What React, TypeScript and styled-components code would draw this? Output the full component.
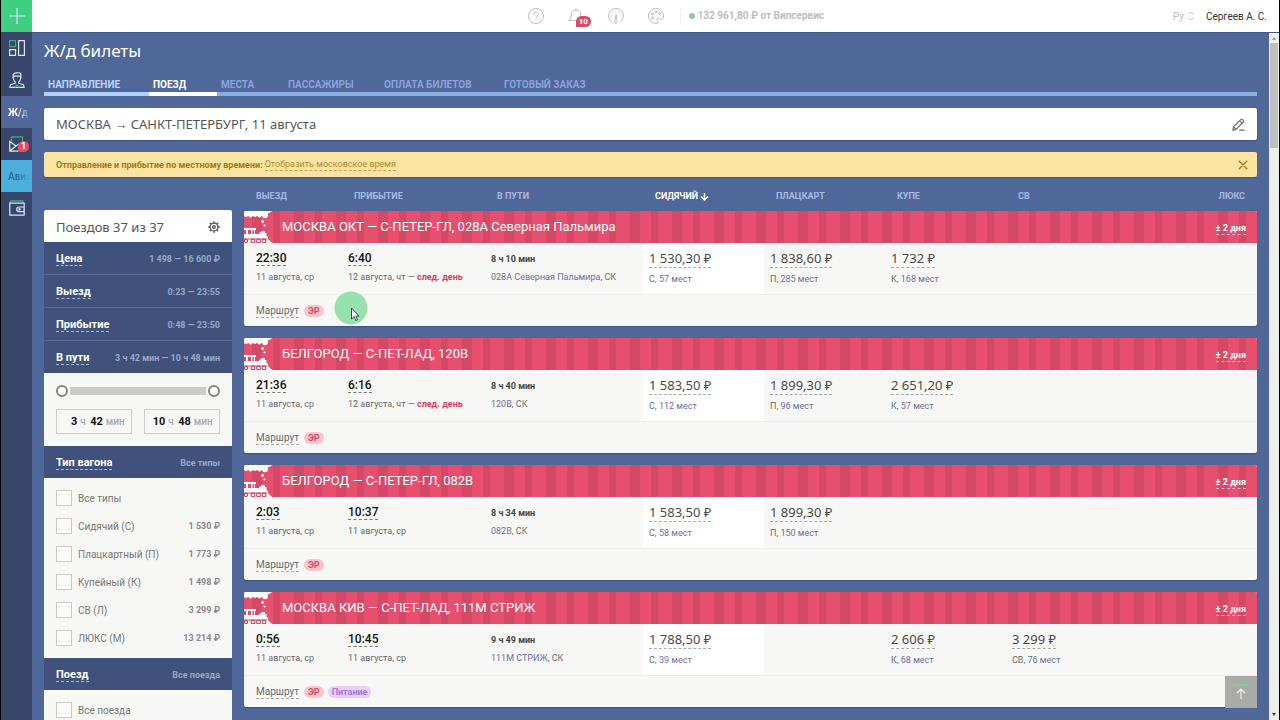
import React from 'react';
import styled, { createGlobalStyle, css } from 'styled-components';

const display = '"Noto Sans", "Open Sans", sans-serif';
const label = 'Roboto, "Noto Sans", sans-serif';

const Global = createGlobalStyle`
  * { box-sizing: border-box; }
  body { margin: 0; background: #50679a; font-family: ${label}; color: #4a4a4a; }
  button { font: inherit; color: inherit; padding: 0; border: 0; background: none; cursor: pointer; }
  a { color: inherit; text-decoration: none; }
  svg { display: block; }
`;

const Shell = styled.div`
  display: flex;
  height: 100vh;
  overflow: hidden;
  border: solid #000;
  border-width: 0 1px;
  position: relative;
`;

/* ---------- left rail ---------- */
const Rail = styled.nav`
  width: 31px;
  flex: none;
  display: flex;
  flex-direction: column;
  background: #37466a;
`;

const RailItem = styled.a<{ $bg?: string; $color?: string }>`
  height: 32px;
  display: flex;
  align-items: center;
  justify-content: center;
  position: relative;
  overflow: hidden;
  background: ${p => p.$bg || 'transparent'};
  color: ${p => p.$color || '#dde6f7'};
  font-size: 10px;
  font-weight: 700;
  white-space: nowrap;
`;

const RailText = styled.span`
  width: 100%;
  padding-left: 7px;
  mask-image: linear-gradient(90deg, #000 50%, transparent 95%);
`;

const RailBadge = styled.span`
  position: absolute;
  right: 3px;
  top: 13px;
  height: 11px;
  min-width: 11px;
  border-radius: 6px 6px 6px 0;
  background: #e0506c;
  color: #fff;
  font-size: 9px;
  line-height: 11px;
  text-align: center;
`;

/* ---------- top bar ---------- */
const Column = styled.div`
  flex: 1;
  min-width: 0;
  display: flex;
  flex-direction: column;
`;

const TopBar = styled.header`
  height: 32px;
  flex: none;
  display: grid;
  grid-template-columns: 494fr 643fr auto;
  align-items: center;
  padding-right: 12px;
  background: #fff;
`;

const Tools = styled.div`
  grid-column: 2;
  display: flex;
  align-items: center;
  color: #bdbdbd;
`;

const ToolButton = styled.button`
  width: 16px;
  height: 16px;
  margin-right: 24px;
  position: relative;
`;

const ToolBadge = styled.span`
  position: absolute;
  left: 8px;
  top: 8px;
  padding: 0 3px;
  height: 11px;
  border-radius: 6px 6px 6px 0;
  background: #d54c69;
  color: #fff;
  font-size: 8px;
  font-weight: 700;
  line-height: 11px;
`;

const Balance = styled.p`
  display: flex;
  align-items: center;
  gap: 3px;
  margin: 0 0 0 -8px;
  padding-left: 8px;
  border-left: 1px dotted #e4e4e4;
  color: #bdbdbd;
  font-size: 10px;
  font-weight: 700;
  line-height: 16px;
  white-space: nowrap;
`;

const OnlineDot = styled.i`
  width: 6px;
  height: 6px;
  border-radius: 50%;
  background: #86cf9c;
`;

const Account = styled.div`
  display: flex;
  align-items: center;
  gap: 12px;
  font-size: 10px;
  color: #333;
  white-space: nowrap;
`;

const Language = styled.button`
  display: flex;
  align-items: center;
  gap: 4px;
  color: #bdbdbd;
`;

/* ---------- page ---------- */
const Body = styled.div`
  flex: 1;
  min-height: 0;
  display: flex;
  border-top: 1px solid #44598a;
`;

const Page = styled.main`
  flex: 1;
  min-width: 0;
  padding: 0 12px;
  overflow: hidden;
  background: #50679a;
`;

const Title = styled.h1`
  margin: 0 0 8px;
  font: 400 17px/35px ${display};
  color: #fff;
`;

const Tabs = styled.nav`
  display: flex;
`;

const Tab = styled.a<{ $w?: number; $color: string; $bar: string }>`
  ${p => (p.$w ? css`width: ${p.$w}px; flex: none;` : css`flex: 1;`)}
  padding: 2px 0 0 4px;
  border-bottom: 4px solid ${p => p.$bar};
  color: ${p => p.$color};
  font-size: 10px;
  font-weight: 700;
  line-height: 14px;
  white-space: nowrap;
`;

const RouteBar = styled.section`
  display: flex;
  align-items: center;
  justify-content: space-between;
  height: 32px;
  margin-top: 12px;
  padding: 0 12px;
  border-radius: 2px;
  background: #fff;
  box-shadow: 0 1px 1px #3f5382;
  font: 400 13px/32px ${display};
  color: #555;
`;

const Notice = styled.section`
  display: flex;
  align-items: center;
  gap: 2px;
  height: 25px;
  margin-top: 12px;
  padding: 0 8px 0 12px;
  border-radius: 2px;
  background: #fbe4a2;
  box-shadow: 0 1px 1px #3f5382;
  font-size: 9px;
  color: #a67a10;
  button { margin-left: auto; }
`;

const NoticeLink = styled.a`
  line-height: 11px;
  border-bottom: 1px dashed #c9a64e;
  color: #b48b2a;
`;

const Content = styled.div`
  display: flex;
  align-items: flex-start;
  gap: 12px;
`;

/* ---------- filters ---------- */
const Filters = styled.aside`
  width: 188px;
  flex: none;
  margin-top: 33px;
`;

const FiltersHead = styled.header`
  display: flex;
  align-items: center;
  justify-content: space-between;
  height: 32px;
  padding: 2px 12px 0;
  border-radius: 2px 2px 0 0;
  background: #fff;
  h2 { margin: 0; font: 400 13px/30px ${display}; color: #555; }
`;

const FilterRow = styled.div<{ $line?: boolean }>`
  display: flex;
  align-items: center;
  justify-content: space-between;
  height: ${p => (p.$line ? 33 : 32)}px;
  padding: 2px 12px 0;
  border-bottom: ${p => (p.$line ? '1px solid #566b98' : '0')};
  background: #40527b;
  color: #fff;
  font-size: 11px;
  font-weight: 700;
  button { line-height: 13px; border-bottom: 1px dashed #a9b8d8; }
  span { font-size: 9px; color: #98a7c9; white-space: nowrap; }
`;

const RangePanel = styled.div`
  height: 73px;
  padding: 12px;
  background: #f7f8f5;
`;

const Slider = styled.div`
  display: grid;
  height: 12px;
  align-items: center;
  background: linear-gradient(#cbcbc8, #cbcbc8) 14px 2px / calc(100% - 28px) 8px no-repeat;
`;

const Thumb = styled.input`
  grid-area: 1 / 1;
  appearance: none;
  width: 100%;
  height: 12px;
  margin: 0;
  background: none;
  pointer-events: none;
  &::-webkit-slider-thumb {
    appearance: none;
    pointer-events: auto;
    width: 12px;
    height: 12px;
    border: 2px solid #858583;
    border-radius: 50%;
    background: #fff;
  }
`;

const Limits = styled.div`
  display: flex;
  justify-content: space-between;
  margin-top: 12px;
`;

const Limit = styled.fieldset`
  display: flex;
  align-items: center;
  justify-content: center;
  gap: 3px;
  width: 76px;
  height: 25px;
  margin: 0;
  padding: 0;
  border: 1px solid #ccccc8;
  font-size: 10px;
  font-weight: 500;
  color: #aaa;
`;

const LimitInput = styled.input`
  width: 14px;
  padding: 0;
  border: 0;
  background: none;
  color: #111;
  font: 700 11px/16px ${label};
  text-align: right;
`;

const Checks = styled.div`
  padding: 6px 12px;
  background: #f7f8f5;
`;

const Check = styled.label`
  display: flex;
  align-items: center;
  gap: 6px;
  height: 28px;
  font-size: 10px;
  color: #777;
  white-space: nowrap;
  b { margin-left: auto; font-size: 9px; color: #8a8a8a; }
  input {
    appearance: none;
    width: 16px;
    height: 16px;
    margin: 0;
    border: 1px solid #c9c9c5;
    background: #f9f9f7;
  }
`;

/* ---------- trains ---------- */
const columns = '92fr 143fr 164fr 121fr 121fr 121fr 121fr 130fr';

const TrainTable = styled.table`
  display: block;
  flex: 1;
  min-width: 0;
`;

const TableHead = styled.thead`
  display: block;
  tr { display: grid; grid-template-columns: ${columns}; height: 34px; align-items: center; padding-top: 4px; }
`;

const HeadCell = styled.th<{ $pad?: number; $active?: boolean; $end?: boolean }>`
  padding: 0 12px 0 ${p => p.$pad || 12}px;
  font-size: 9px;
  font-weight: 700;
  line-height: 12px;
  text-align: ${p => (p.$end ? 'right' : 'left')};
  color: ${p => (p.$active ? '#fff' : '#a8bae1')};
  button { display: flex; align-items: center; gap: 2px; }
`;

const TrainCard = styled.tbody`
  display: block;
  margin-bottom: 12px;
  border-radius: 2px;
  overflow: hidden;
  background: #f7f8f5;
  box-shadow: 0 1px 1px #3f5382;
`;

const Banner = styled.tr`
  display: flex;
  height: 32px;
  background: repeating-linear-gradient(90deg,
    #e6506e 0 8px, #d44a66 8px 18px, #e6506e 18px 29px, #d44a66 29px 36px, #e6506e 36px 42px);
`;

const BannerCell = styled.th`
  flex: 1;
  display: flex;
  align-items: center;
  gap: 10px;
  padding: 0 11px 0 0;
  font: 400 13px/32px ${label};
  color: #fff;
  text-align: left;
  button { margin: 3px 0 0 auto; font: 700 9px/11px ${label}; border-bottom: 1px dashed #f6b3c0; }
`;

const TrainRow = styled.tr`
  display: grid;
  grid-template-columns: ${columns};
  height: 51px;
`;

const Cell = styled.td`
  padding: 8px 0 0 12px;
  white-space: nowrap;
`;

const Time = styled.a`
  display: block;
  width: fit-content;
  color: #111;
  font-size: 12px;
  font-weight: 500;
  line-height: 14px;
  border-bottom: 1px dashed #777;
`;

const Duration = styled.strong`
  display: block;
  padding-top: 2px;
  font-size: 9px;
  line-height: 13px;
  color: #444;
`;

const Small = styled.span`
  display: block;
  margin-top: 5px;
  font-size: 9px;
  line-height: 12px;
  color: #6a6a6a;
  a { color: #6f6da5; }
  b { color: #d43f66; }
`;

const PriceCell = styled.td<{ $selected?: boolean }>`
  padding: 7px 0 0 6px;
  background: ${p => (p.$selected ? '#fff' : 'transparent')};
  white-space: nowrap;
`;

const Price = styled.a`
  display: block;
  width: fit-content;
  font: 400 13px/17px ${display};
  color: #4a4a4a;
  border-bottom: 1px dashed #aaa;
`;

const Footer = styled.tr`
  display: flex;
  height: 32px;
  border-top: 1px solid #eeefec;
`;

const FooterCell = styled.td`
  display: flex;
  align-items: center;
  gap: 4px;
  padding: 0 12px;
`;

const RouteLink = styled.a`
  margin-right: 1px;
  font-size: 10px;
  line-height: 13px;
  color: #6a6a6a;
  border-bottom: 1px dashed #aaa;
`;

const Pill = styled.span<{ $violet?: boolean }>`
  padding: 0 4px;
  border-radius: 6px;
  background: ${p => (p.$violet ? '#e6cffa' : '#fbc4cd')};
  color: ${p => (p.$violet ? '#a678d8' : '#c94f64')};
  font-size: 9px;
  font-weight: 700;
  line-height: 12px;
`;

/* ---------- overlays and scroll bar ---------- */
const ToTop = styled.button`
  position: absolute;
  right: 22px;
  bottom: 12px;
  width: 32px;
  height: 32px;
  display: grid;
  place-items: center;
  background: #a9aba9;
`;

const Pointer = styled.div`
  position: absolute;
  left: 333px;
  top: 291px;
`;

const ScrollBar = styled.div`
  width: 10px;
  flex: none;
  display: flex;
  flex-direction: column;
  align-items: center;
  background: #efeff1;
  i { width: 8px; height: 105px; background: #c0bfc0; }
  svg:last-child { margin-top: auto; }
`;

/* ---------- drawings ---------- */
const Locomotive = () => (
  <svg width="28" height="32" viewBox="0 0 28 32" fill="#fff">
    <path d="M0 0H28l-2 1.500-2.500 1V5H0z" />
    <circle cx="2" cy="4" r="2" />
    <circle cx="6.500" cy="4.500" r="2" />
    <circle cx="11" cy="4" r="2" />
    <circle cx="15.500" cy="4.500" r="2" />
    <circle cx="21" cy="4.500" r="2.800" />
    <circle cx="18.500" cy="10.500" r="1.400" />
    <circle cx="20.500" cy="14.500" r="1" />
    <path d="M0 17h12v2h-1v4h4v-1.500h2V20h4v2h1.500v3l1.500 1v2l4 4H0z" />
    <path fill="#dc4c69" d="M0 19h2v4H0zM4 19h3v4H4zM8.500 19H10v4H8.500z" />
    <path fill="#d0466a" d="M0 27.500h23v1H0z" />
    <g fill="#fff" stroke="#c8405c" strokeWidth="1.100">
      <circle cx="2" cy="30" r="1.600" />
      <circle cx="9" cy="30" r="1.900" />
      <circle cx="14.500" cy="30" r="1.900" />
      <circle cx="20" cy="30" r="1.900" />
    </g>
  </svg>
);

const Line = ({ children, size = 16, color = 'currentColor', w = 1 }: { children: React.ReactNode; size?: number; color?: string; w?: number }) => (
  <svg width={size} height={size} viewBox="0 0 16 16" fill="none" stroke={color} strokeWidth={w} strokeLinecap="round" strokeLinejoin="round">
    {children}
  </svg>
);

const RailIcon = {
  plus: <Line w={1.2}><path d="M8 .5v15M.5 8h15" /></Line>,
  dashboard: (
    <Line w={1.2}>
      <rect x=".6" y=".6" width="6" height="6" stroke="#3fae86" />
      <rect x=".6" y="9.600" width="6" height="5.800" />
      <rect x="9.600" y=".6" width="5.800" height="14.800" />
    </Line>
  ),
  person: (
    <Line w={1.2}>
      <path d="M4.200 5.500V2.200C5 .8 10.500.2 11.800 1.500v4M4.200 4.200h7.600" />
      <path d="M4.200 5.500c0 2 .8 3.600 2 4.500v1.300L1.500 12.800.8 15.300h14.400l-.7-2.500-4.700-1.500V10c1.200-.9 2-2.500 2-4.500" />
      <path d="M6 15l2-2 2 2" stroke="#3fae86" />
    </Line>
  ),
  mail: (
    <Line w={1.2}>
      <path d="M2.500 5V.8h11V7" stroke="#3fae86" />
      <path d="M.8 5v10.200h10M.8 5.500L7 10 .8 15M7 10l3-2" />
    </Line>
  ),
  wallet: (
    <Line w={1.2}>
      <path d="M1 3.200C1 1.500 1.500 .8 3 .8h11v2" stroke="#3fae86" />
      <path d="M.8 3.200h14.400v12H.8zM15 7h-5a2.300 2.300 0 0 0 0 4.600h5z" />
      <circle cx="10.500" cy="9.300" r=".6" />
    </Line>
  ),
};

/* ---------- data ---------- */
type Seat = [price: string, kind: string, places: string] | null;
interface Train {
  name: string; dep: string; depDate: string; arr: string; arrDate: string; nextDay?: boolean;
  time: string; number: string; seats: Seat[]; meal?: boolean;
}

const trains: Train[] = [
  { name: 'МОСКВА ОКТ — С-ПЕТЕР-ГЛ, 028А Северная Пальмира', dep: '22:30', depDate: '11 августа, ср', arr: '6:40', arrDate: '12 августа, чт', nextDay: true, time: '8 ч 10 мин', number: '028А Северная Пальмира', seats: [['1 530,30', 'С', '57 мест'], ['1 838,60', 'П', '285 мест'], ['1 732', 'К', '168 мест'], null, null] },
  { name: 'БЕЛГОРОД — С-ПЕТ-ЛАД, 120В', dep: '21:36', depDate: '11 августа, ср', arr: '6:16', arrDate: '12 августа, чт', nextDay: true, time: '8 ч 40 мин', number: '120В', seats: [['1 583,50', 'С', '112 мест'], ['1 899,30', 'П', '96 мест'], ['2 651,20', 'К', '57 мест'], null, null] },
  { name: 'БЕЛГОРОД — С-ПЕТЕР-ГЛ, 082В', dep: '2:03', depDate: '11 августа, ср', arr: '10:37', arrDate: '11 августа, ср', time: '8 ч 34 мин', number: '082В', seats: [['1 583,50', 'С', '58 мест'], ['1 899,30', 'П', '150 мест'], null, null, null] },
  { name: 'МОСКВА КИВ — С-ПЕТ-ЛАД, 111М СТРИЖ', dep: '0:56', depDate: '11 августа, ср', arr: '10:45', arrDate: '11 августа, ср', time: '9 ч 49 мин', number: '111М СТРИЖ', seats: [['1 788,50', 'С', '39 мест'], null, ['2 606', 'К', '68 мест'], ['3 299', 'СВ', '76 мест'], null], meal: true },
];

const tabs: [string, number | undefined, string, string][] = [
  ['НАПРАВЛЕНИЕ', 105, '#b9d5fb', '#b3d0f9'],
  ['ПОЕЗД', 68, '#fff', '#fff'],
  ['МЕСТА', 67, '#86a6dc', '#8cade0'],
  ['ПАССАЖИРЫ', 96, '#86a6dc', '#8cade0'],
  ['ОПЛАТА БИЛЕТОВ', 120, '#86a6dc', '#8cade0'],
  ['ГОТОВЫЙ ЗАКАЗ', undefined, '#86a6dc', '#8cade0'],
];

const wagonTypes: [string, string?][] = [
  ['Все типы'],
  ['Сидячий (С)', '1 530 ₽'],
  ['Плацкартный (П)', '1 773 ₽'],
  ['Купейный (К)', '1 498 ₽'],
  ['СВ (Л)', '3 299 ₽'],
  ['ЛЮКС (М)', '13 214 ₽'],
];

const TrainItem = ({ t }: { t: Train }) => (
  <TrainCard>
    <Banner>
      <BannerCell colSpan={8}>
        <Locomotive />
        {t.name}
        <button>± 2 дня</button>
      </BannerCell>
    </Banner>
    <TrainRow>
      <Cell><Time href="#dep">{t.dep}</Time><Small>{t.depDate}</Small></Cell>
      <Cell>
        <Time href="#arr">{t.arr}</Time>
        <Small>{t.arrDate}{t.nextDay && <> — <b>след. день</b></>}</Small>
      </Cell>
      <Cell><Duration>{t.time}</Duration><Small><a href="#train">{t.number}</a>, СК</Small></Cell>
      {t.seats.map((s, i) => (
        <PriceCell key={i} $selected={i === 0}>
          {s && <><Price href="#buy">{s[0]} ₽</Price><Small>{s[1]}, <a href="#seats">{s[2]}</a></Small></>}
        </PriceCell>
      ))}
    </TrainRow>
    <Footer>
      <FooterCell colSpan={8}>
        <RouteLink href="#route">Маршрут</RouteLink>
        <Pill>ЭР</Pill>
        {t.meal && <Pill $violet>Питание</Pill>}
      </FooterCell>
    </Footer>
  </TrainCard>
);

export default function App() {
  return (
    <Shell>
      <Global />
      <Rail>
        <RailItem href="#new" $bg="#3fcf80" aria-label="Новый заказ">{RailIcon.plus}</RailItem>
        <RailItem href="#dashboard" aria-label="Сводка">{RailIcon.dashboard}</RailItem>
        <RailItem href="#people" aria-label="Пассажиры">{RailIcon.person}</RailItem>
        <RailItem href="#rail" $bg="#50679a" $color="#fff"><RailText>Ж/д</RailText></RailItem>
        <RailItem href="#mail" aria-label="Сообщения">{RailIcon.mail}<RailBadge>1</RailBadge></RailItem>
        <RailItem href="#avia" $bg="#4cafde" $color="#2c6f9c"><RailText>Авиа</RailText></RailItem>
        <RailItem href="#wallet" aria-label="Кошелёк">{RailIcon.wallet}</RailItem>
      </Rail>
      <Column>
        <TopBar>
          <Tools>
            <ToolButton aria-label="Справка">
              <Line><circle cx="8" cy="8" r="7.500" /><path d="M5.700 6.200C5.700 3.200 10.300 3.200 10.300 6c0 1.800-2.300 1.800-2.300 3.800M8 11.800v.4" /></Line>
            </ToolButton>
            <ToolButton aria-label="Уведомления">
              <Line><path d="M.8 12.500h14.400c-1.500-1-2.400-2-2.400-6C12.800 3.800 10.500 2 8 2S3.200 3.800 3.200 6.500c0 4-.9 5-2.400 6zM7 1.800a1 1 0 0 1 2 0" /></Line>
              <ToolBadge>10</ToolBadge>
            </ToolButton>
            <ToolButton aria-label="Скорость">
              <Line><path d="M3.800 14.200A7.500 7.500 0 1 1 12.200 14.200M8 7L6.800 13.500a1.300 1.300 0 1 0 2.400 0zM3 8h.5M12.500 8h.5M4.600 4.600l.3.300M11.100 4.900l.3-.3" /></Line>
            </ToolButton>
            <ToolButton aria-label="Оформление">
              <Line>
                <path d="M15.500 8A7.500 7.500 0 1 0 9.500 15.300c1.500-.5.500-2-.2-2.800-.8-1.200.2-2.700 1.700-2.300 1 .3 1.500 1.500 2.800 1.200 1.200-.4 1.700-2 1.700-3.400z" />
                <circle cx="4.500" cy="6" r="1" /><circle cx="8" cy="3.800" r="1" /><circle cx="11.500" cy="5.500" r="1" /><circle cx="4.500" cy="9.800" r="1" />
              </Line>
            </ToolButton>
            <Balance><OnlineDot />132 961,80 ₽ от Випсервис</Balance>
          </Tools>
          <Account>
            <Language>Ру <svg width="6" height="10" viewBox="0 0 6 10" fill="none" stroke="currentColor"><path d="M.5 3.500L3 1l2.500 2.500M.5 6.500L3 9l2.500-2.500" /></svg></Language>
            <span>Сергеев А. С.</span>
          </Account>
        </TopBar>
        <Body>
          <Page>
            <Title>Ж/д билеты</Title>
            <Tabs>
              {tabs.map(([t, w, c, b]) => <Tab key={t} href="#step" $w={w} $color={c} $bar={b}>{t}</Tab>)}
            </Tabs>
            <RouteBar>
              МОСКВА → САНКТ-ПЕТЕРБУРГ, 11 августа
              <button aria-label="Изменить">
                <Line size={13} color="#666" w={1.4}>
                  <path d="M1 15l.8-4L11 1.800c1-1.200 4.200 1.500 3 3L5 14zM9.500 3.500l3 3M2 11l3 3M9.500 15H15" />
                </Line>
              </button>
            </RouteBar>
            <Notice>
              <b>Отправление и прибытие по местному времени:</b>
              <NoticeLink href="#moscow">Отобразить московское время</NoticeLink>
              <button aria-label="Закрыть">
                <Line size={12} color="#a67a10" w={1.8}><path d="M3 3l10 10M13 3L3 13" /></Line>
              </button>
            </Notice>
            <Content>
              <Filters>
                <FiltersHead>
                  <h2>Поездов 37 из 37</h2>
                  <button aria-label="Настройки">
                    <Line size={12} color="#555" w={1.7}>
                      <circle cx="8" cy="8" r="5.300" /><circle cx="8" cy="8" r="1.800" />
                      <path d="M8 .8v1.500M8 13.700v1.500M.8 8h1.500M13.700 8h1.500M2.900 2.900l1 1M12.100 12.100l1 1M2.900 13.100l1-1M12.100 3.900l1-1" />
                    </Line>
                  </button>
                </FiltersHead>
                <FilterRow $line><button>Цена</button><span>1 498 — 16 600 ₽</span></FilterRow>
                <FilterRow $line><button>Выезд</button><span>0:23 — 23:55</span></FilterRow>
                <FilterRow $line><button>Прибытие</button><span>0:48 — 23:50</span></FilterRow>
                <FilterRow><button>В пути</button><span>3 ч 42 мин — 10 ч 48 мин</span></FilterRow>
                <RangePanel>
                  <Slider>
                    <Thumb type="range" min={222} max={648} defaultValue={222} aria-label="Не меньше" />
                    <Thumb type="range" min={222} max={648} defaultValue={648} aria-label="Не больше" />
                  </Slider>
                  <Limits>
                    <Limit><LimitInput defaultValue="3" aria-label="От, часы" />ч<LimitInput defaultValue="42" aria-label="От, минуты" />мин</Limit>
                    <Limit><LimitInput defaultValue="10" aria-label="До, часы" />ч<LimitInput defaultValue="48" aria-label="До, минуты" />мин</Limit>
                  </Limits>
                </RangePanel>
                <FilterRow><button>Тип вагона</button><span>Все типы</span></FilterRow>
                <Checks>
                  {wagonTypes.map(([name, price]) => (
                    <Check key={name}><input type="checkbox" />{name}{price && <b>{price}</b>}</Check>
                  ))}
                </Checks>
                <FilterRow><button>Поезд</button><span>Все поезда</span></FilterRow>
                <Checks><Check><input type="checkbox" />Все поезда</Check></Checks>
              </Filters>
              <TrainTable>
                <TableHead>
                  <tr>
                    <HeadCell>ВЫЕЗД</HeadCell>
                    <HeadCell $pad={18}>ПРИБЫТИЕ</HeadCell>
                    <HeadCell $pad={18}>В ПУТИ</HeadCell>
                    <HeadCell $active>
                      <button>СИДЯЧИЙ <svg width="9" height="9" viewBox="0 0 9 9" fill="none" stroke="currentColor" strokeWidth="1.500"><path d="M4.500 1v7M1 4.500L4.500 8 8 4.500" /></svg></button>
                    </HeadCell>
                    <HeadCell>ПЛАЦКАРТ</HeadCell>
                    <HeadCell>КУПЕ</HeadCell>
                    <HeadCell>СВ</HeadCell>
                    <HeadCell $end>ЛЮКС</HeadCell>
                  </tr>
                </TableHead>
                {trains.map(t => <TrainItem key={t.name} t={t} />)}
              </TrainTable>
            </Content>
          </Page>
          <ScrollBar>
            <svg width="8" height="10" viewBox="0 0 8 10"><path fill="#999" d="M2 7h4L4 4z" /></svg>
            <i />
            <svg width="8" height="10" viewBox="0 0 8 10"><path fill="#444" d="M2 3h4L4 6z" /></svg>
          </ScrollBar>
        </Body>
      </Column>
      <ToTop aria-label="Наверх">
        <svg width="16" height="18" viewBox="0 0 16 18" fill="none" stroke="#f4f5f3" strokeWidth="1.200">
          <path stroke="#7ecb9c" strokeWidth="2" d="M0 2h16" />
          <path d="M8 16V6M4 10l4-4 4 4" />
        </svg>
      </ToTop>
      <Pointer aria-hidden>
        <svg width="34" height="34" viewBox="0 0 34 34">
          <circle cx="17" cy="17" r="16.500" fill="#96e2ae" />
          <path fill="#fff" stroke="#333" strokeWidth=".9" d="M17.500 17v11l2.600-2.300 1.800 3.800 1.600-.8-1.800-3.600h3.300z" />
        </svg>
      </Pointer>
    </Shell>
  );
}
